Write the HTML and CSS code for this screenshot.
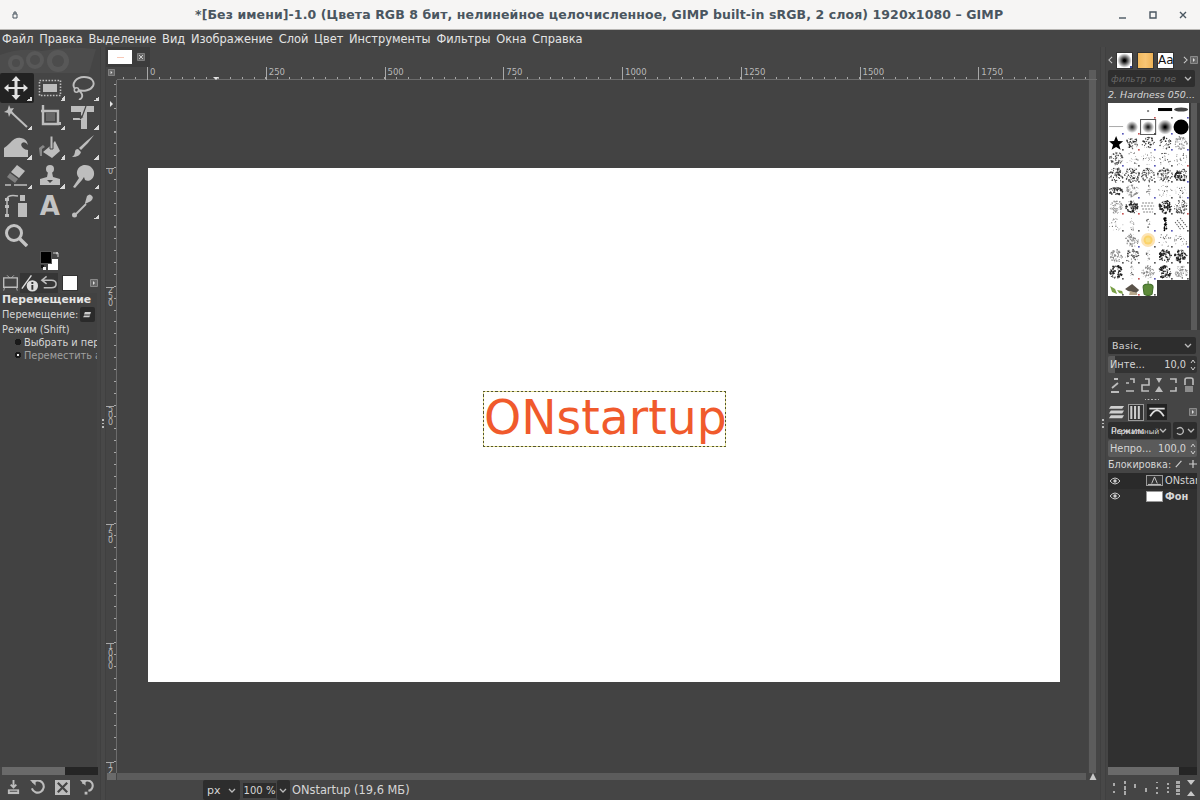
FILE: index.html
```html
<!DOCTYPE html>
<html lang="ru">
<head>
  <meta charset="UTF-8">
  <title>GIMP</title>
  <link rel="stylesheet" href="styles.css">
</head>
<body>
  <header class="titlebar">
    <svg class="win-menu" viewBox="0 0 8 8"><path d="M2 3h4v4H2zM3 3V1h2v2" fill="none" stroke="#4a5660"/></svg>
    <div class="title">*[Без имени]-1.0 (Цвета RGB 8 бит, нелинейное целочисленное, GIMP built-in sRGB, 2 слоя) 1920x1080 – GIMP</div>
    <div class="win-buttons">
      <svg viewBox="0 0 10 10"><path d="M1 8h7" stroke="#4a5660" stroke-width="1.4"/></svg>
      <svg viewBox="0 0 10 10"><path d="M2 2h6v6H2z" fill="none" stroke="#4a5660" stroke-width="1.4"/></svg>
      <svg viewBox="0 0 10 10"><path d="M2 2l6 6M8 2l-6 6" stroke="#4a5660" stroke-width="1.4"/></svg>
    </div>
  </header>

  <nav class="menubar">
    <span>Файл</span><span>Правка</span><span>Выделение</span><span>Вид</span><span>Изображение</span><span>Слой</span><span>Цвет</span><span>Инструменты</span><span>Фильтры</span><span>Окна</span><span>Справка</span>
  </nav>

  <div class="workspace">
    <aside class="toolbox">
      <svg class="wilber" viewBox="0 0 96 25"><path d="M0 25V7Q20 -1 42 3Q70 -2 96 1L89 25z" fill="#4c4c4c"/><circle cx="16" cy="15" r="8" fill="#585858"/><circle cx="16" cy="15" r="4" fill="#4c4c4c"/><circle cx="35" cy="12" r="9" fill="#585858"/><circle cx="35" cy="12" r="5" fill="#4c4c4c"/><circle cx="58" cy="13" r="11" fill="#585858"/><circle cx="58" cy="13" r="6" fill="#4c4c4c"/></svg>
      <div class="tools">
        <div class="tool active"><svg viewBox="0 0 24 24"><path fill="#e2e2e2" d="M12 0l4.500 5h-3v6h6V8l4.500 4-4.500 4v-3h-6v6h3L12 24l-4.500-5h3v-6h-6v3L0 12l4.500-4v3h6V5h-3z"/></svg></div>
        <div class="tool"><svg viewBox="0 0 24 24"><path d="M1.500 4.500h21v15h-21z" fill="none" stroke="#bdbdbd" stroke-width="1.600" stroke-dasharray="1.600 1.400"/><path d="M5 8h14v8H5z" fill="#bdbdbd"/></svg></div>
        <div class="tool"><svg viewBox="0 0 24 24"><path d="M4 13C0 8 5 1 13 1s11 5 9 9-9 6-15 4c3 2 5 4 4 7s-3 2-3 2" fill="none" stroke="#bdbdbd" stroke-width="1.900"/><circle cx="5.500" cy="14" r="2.200" fill="none" stroke="#bdbdbd" stroke-width="1.500"/></svg></div>

        <div class="tool"><svg viewBox="0 0 24 24"><path d="M8 8l15 14" stroke="#bdbdbd" stroke-width="2"/><path d="M5 0l1.500 3.500L10 3 8 6l2 3-3.500-.5L5 12 4 8 0 7l3.500-2z" fill="#bdbdbd"/></svg></div>
        <div class="tool"><svg viewBox="0 0 24 24"><path d="M5 0v4M5 4v15h15V6H3" fill="none" stroke="#bdbdbd" stroke-width="2.400"/><path d="M8 7h9v9H8z" fill="#666"/><path d="M22 17v3" stroke="#bdbdbd" stroke-width="2"/></svg></div>
        <div class="tool"><svg viewBox="0 0 24 24"><path d="M0 1h23v6h-7v17h-6V15H2v-2h8V7H0z" fill="#bdbdbd"/><path d="M3 12h8l-2-2M11 12l-2 2M15 1l-4 11" fill="none" stroke="#454545" stroke-width="1.200"/></svg></div>

        <div class="tool"><svg viewBox="0 0 24 24"><path d="M0 22v-9q3-2 6-5 5-6 11-5 6 1 7 7-3-4-6-2-2 2 1 5 2 2 5 2v7z" fill="#bdbdbd"/></svg></div>
        <div class="tool"><svg viewBox="0 0 24 24"><path d="M11 11l6-6 5 10-8 7-9-6z" fill="#bdbdbd" transform="translate(0 1)"/><path d="M12 1h3v13h-3z" fill="#bdbdbd" stroke="#454545"/><path d="M1 13l4-3 2 2-3 2v7H2z" fill="#888"/></svg></div>
        <div class="tool"><svg viewBox="0 0 24 24"><path d="M23 0Q17 9 10 15l-2-2Q15 6 23 0z" fill="#bdbdbd"/><path d="M7 14l3 3q-1 5-9 5 3-2 3-5t3-3z" fill="#bdbdbd"/></svg></div>

        <div class="tool"><svg viewBox="0 0 24 24"><path d="M13 1l8 6-6 7-8-6z" fill="#bdbdbd"/><path d="M6 9l8 6-3 4-8-6z" fill="#7f7f7f"/><path d="M1 21h6M10 21h13" stroke="#bdbdbd" stroke-width="1.500"/></svg></div>
        <div class="tool"><svg viewBox="0 0 24 24"><circle cx="12" cy="5" r="4" fill="#bdbdbd"/><path d="M10 8h4l1 5 7 2v6H2v-6l7-2z" fill="#bdbdbd"/><path d="M9 16h6l-3 3z" fill="#454545"/></svg></div>
        <div class="tool"><svg viewBox="0 0 24 24"><path d="M2 23l6-9C3 8 8 1 14 1s10 5 9 10-6 7-9 5l-1-3-2 3-7 8z" fill="#bdbdbd"/></svg></div>

        <div class="tool plain"><svg viewBox="0 0 24 24"><path d="M3 5Q4 0 14 2" fill="none" stroke="#bdbdbd" stroke-width="1.500"/><path d="M3 4v18" stroke="#bdbdbd" stroke-width="1.500"/><path d="M1 4h4v3H1zM1 11h4v3H1zM1 20h4v3H1z" fill="#bdbdbd"/><path d="M14 9h9v14h-9zM16 1h5v6h-5z" fill="#bdbdbd"/></svg></div>
        <div class="tool plain"><span class="tool-letter">A</span></div>
        <div class="tool"><svg viewBox="0 0 24 24"><path d="M14 9l2-7q3-3 5 0 2 2-1 5l-6 3z" fill="#bdbdbd"/><path d="M15 10L5 20" stroke="#bdbdbd" stroke-width="1.800"/><circle cx="3.500" cy="21" r="2.500" fill="#bdbdbd"/></svg></div>

        <div class="tool plain"><svg viewBox="0 0 24 24"><circle cx="10" cy="10" r="7.500" fill="none" stroke="#c4c4c4" stroke-width="3"/><path d="M15 15l8 8" stroke="#c4c4c4" stroke-width="3.400"/></svg></div>
      </div>

      <div class="colors">
        <div class="color-stack">
          <span class="color-bg"></span><span class="color-fg"></span>
          <svg class="color-swap" viewBox="0 0 6 6"><path d="M0 1h5v4M3 0l2 1-2 1" fill="none" stroke="#ccc"/></svg>
          <svg class="color-default" viewBox="0 0 5 5"><path d="M0 0h3v3H0z" fill="#111"/><path d="M2 2h3v3H2z" fill="#eee"/></svg>
        </div>
      </div>

      <div class="option-tabs">
        <svg class="tab active-tab" viewBox="0 0 20 20"><path d="M2 4h16v11H2z" fill="none" stroke="#bdbdbd" stroke-width="1.600"/><path d="M6 1l3 3M14 1l-3 3M3 15l-1 4M17 15l1 4" stroke="#bdbdbd"/></svg>
        <svg class="tab" viewBox="0 0 20 20"><path d="M2 16L12 2" stroke="#ddd" stroke-width="1.500"/><circle cx="13" cy="13" r="6" fill="#ddd"/><path d="M12 9h2v2h-2zM12 12h2v5h-2z" fill="#333"/></svg>
        <svg class="tab" viewBox="0 0 20 20"><path d="M8 3L3 7l5 4M3 7h10q5 0 5 4t-5 4H5" fill="none" stroke="#bdbdbd" stroke-width="1.600"/></svg>
        <span class="tab-swatch"></span>
        <svg class="dock-config" viewBox="0 0 8 8"><path d="M.5.5h7v7h-7z" fill="#666" stroke="#8a8a8a"/><path d="M3 2l2 2-2 2z" fill="#ddd"/></svg>
      </div>

      <section class="tool-options">
        <h4>Перемещение</h4>
        <div class="opt-row">Перемещение:<span class="opt-btn"><svg viewBox="0 0 10 8"><path d="M2 1h7L8 4H1zM1 5h7L7 7H0z" fill="#ccc"/></svg></span></div>
        <div class="opt-label">Режим (Shift)</div>
        <div class="radio on">Выбрать и пер</div>
        <div class="radio off">Переместить а</div>
      </section>

      <div class="hscroll tool-scroll"><span></span></div>
      <div class="bottom-btns">
        <svg viewBox="0 0 16 16"><path d="M8 0v8M5 5l3 3 3-3" fill="none" stroke="#bdbdbd" stroke-width="2"/><path d="M2 10h12v5H2z" fill="#bdbdbd"/><path d="M4 12h8" stroke="#454545"/></svg>
        <svg viewBox="0 0 16 16"><path d="M3 3a6.500 6.500 0 1 1-1 6" fill="none" stroke="#bdbdbd" stroke-width="2.200"/><path d="M0 0h6v6z" fill="#bdbdbd"/></svg>
        <svg viewBox="0 0 16 16"><path d="M0 0h16v16H0z" fill="#bdbdbd"/><path d="M3 3l10 10M13 3L3 13" stroke="#454545" stroke-width="2.400"/></svg>
        <svg viewBox="0 0 16 16"><path d="M4 4a5.500 5.500 0 1 1 6 7.500" fill="none" stroke="#bdbdbd" stroke-width="2.200"/><path d="M1 0h6v6z" fill="#bdbdbd"/><path d="M6 12.500h3v3H6z" fill="#bdbdbd"/></svg>
      </div>
    </aside>

    <div class="handle"><i></i></div>

    <main class="center">
      <div class="image-tabs">
        <div class="image-tab">
          <span class="thumb"><i></i></span>
          <svg class="tab-close" viewBox="0 0 8 8"><path d="M.5.5h7v7h-7z" fill="#666" stroke="#7c7c7c"/><path d="M2 2l4 4M6 2L2 6" stroke="#ccc"/></svg>
        </div>
      </div>
      <div class="editor">
        <div class="ruler-top">
          <div class="ruler-corner"><svg viewBox="0 0 8 8"><path d="M.5.5h7v7h-7z" fill="#666" stroke="#8a8a8a"/><path d="M3 2l2 2-2 2z" fill="#ddd"/></svg></div>
          <div class="hruler">
            <span>0</span><span>250</span><span>500</span><span>750</span><span>1000</span><span>1250</span><span>1500</span><span>1750</span>
            <b class="marker-h"></b>
          </div>
        </div>
        <div class="editor-mid">
          <div class="vruler">
            <span>0</span><span>250</span><span>500</span><span>750</span><span>1000</span><span>1250</span>
            <b class="marker-v"></b>
          </div>
          <div class="viewport">
            <div class="page">
              <div class="text-layer">ONstartup</div>
            </div>
          </div>
          <div class="vscroll"></div>
        </div>
        <div class="editor-bottom">
          <span class="qmask"></span>
          <div class="hscroll-main"></div>
          <svg class="nav-icon" viewBox="0 0 8 8"><path d="M4 0l4 8H0z" fill="#c8c8c8"/></svg>
        </div>
      </div>
      <footer class="statusbar">
        <div class="combo unit">px<svg class="chev" viewBox="0 0 8 5"><path d="M1 1l3 3 3-3" fill="none" stroke="#bbb" stroke-width="1.300"/></svg></div>
        <div class="zoom-value">100 %</div>
        <div class="combo zoom-drop"><svg class="chev" viewBox="0 0 8 5"><path d="M1 1l3 3 3-3" fill="none" stroke="#bbb" stroke-width="1.300"/></svg></div>
        <div class="status-text">ONstartup (19,6 МБ)</div>
      </footer>
    </main>

    <div class="handle"><i></i></div>

    <aside class="dock">
      <div class="dock-tabs">
        <svg class="arrow" viewBox="0 0 6 10"><path d="M5 1L1 5l4 4" fill="none" stroke="#ccc" stroke-width="1.300"/></svg>
        <span class="dock-tab brush-tab"></span>
        <span class="dock-tab pattern-tab"></span>
        <span class="dock-tab font-tab">Aa</span>
        <svg class="arrow" viewBox="0 0 6 10"><path d="M1 1l4 4-4 4" fill="none" stroke="#ccc" stroke-width="1.300"/></svg>
        <svg class="dock-config" viewBox="0 0 8 8"><path d="M.5.5h7v7h-7z" fill="#666" stroke="#8a8a8a"/><path d="M3 2l2 2-2 2z" fill="#ddd"/></svg>
      </div>
      <div class="filter-field"><span>фильтр по ме</span><svg class="chev" viewBox="0 0 8 5"><path d="M1 1l3 3 3-3" fill="none" stroke="#bbb" stroke-width="1.300"/></svg></div>
      <div class="brush-name">2. Hardness 050...</div>
      <div class="brush-panel">
        <div class="brush-list">
          <div class="brush-grid" id="brushGrid"></div>
        </div>
        <div class="brush-scroll"></div>
      </div>
      <div class="combo tags">Basic,<svg class="chev" viewBox="0 0 8 5"><path d="M1 1l3 3 3-3" fill="none" stroke="#bbb" stroke-width="1.300"/></svg></div>
      <div class="spin spin-first"><span>Инте...</span><span class="spin-val">10,0</span><svg class="updown" viewBox="0 0 6 14"><path d="M1 5l2-3 2 3M1 9l2 3 2-3" fill="none" stroke="#ccc"/></svg></div>
      <div class="brush-actions">
        <svg viewBox="0 0 10 16"><path d="M1 15h8M2 11l6-5M4 2h4" stroke="#bdbdbd" stroke-width="1.800" fill="none"/></svg>
        <svg viewBox="0 0 10 16"><path d="M5 2h4v4M1 6h3M1 14h8" stroke="#bdbdbd" stroke-width="1.600" fill="none"/></svg>
        <svg viewBox="0 0 10 16"><path d="M5 2h4v6H2v6h7" stroke="#bdbdbd" stroke-width="1.600" fill="none"/></svg>
        <svg viewBox="0 0 10 16"><path d="M2 1h6L5 6zM5 9l4 6H1z" fill="#bdbdbd"/></svg>
        <svg viewBox="0 0 10 16"><path d="M1 2h6v4M1 14h6v-4" stroke="#bdbdbd" stroke-width="1.600" fill="none"/></svg>
        <svg viewBox="0 0 10 16"><path d="M1 8V3q0-2 2-2h4q2 0 2 2v5" stroke="#bdbdbd" stroke-width="1.600" fill="none"/><path d="M1 9h8v6H1z" fill="#8c8c8c"/></svg>
      </div>
      <div class="dock-dots"></div>

      <div class="layer-tabs">
        <svg class="ltab" viewBox="0 0 18 18"><path d="M3 2h14l-2 3H1zM3 7h14l-2 3H1zM3 12h14l-2 3H1z" fill="#cfcfcf"/></svg>
        <span class="ltab ltab-active"><svg viewBox="0 0 14 16"><path d="M2 1v14M6 1v14M10 1v14" stroke="#cfcfcf" stroke-width="2.200"/></svg></span>
        <span class="ltab ltab-dark"><svg viewBox="0 0 18 14"><path d="M0 3h18M1 12q8-14 16 0" fill="none" stroke="#dcdcdc" stroke-width="2"/></svg></span>
        <span class="fill"></span>
        <svg class="dock-config" viewBox="0 0 8 8"><path d="M.5.5h7v7h-7z" fill="#666" stroke="#8a8a8a"/><path d="M3 2l2 2-2 2z" fill="#ddd"/></svg>
      </div>
      <div class="mode-row">
        <div class="combo mode"><span class="mode-text"><span>Режим</span><span class="over">Нормальный</span></span><svg class="chev" viewBox="0 0 8 5"><path d="M1 1l3 3 3-3" fill="none" stroke="#bbb" stroke-width="1.300"/></svg></div>
        <div class="combo mode-reset"><svg viewBox="0 0 10 10"><path d="M2 3a3.500 3.500 0 1 1 0 4" fill="none" stroke="#bbb" stroke-width="1.300"/></svg><svg class="chev" viewBox="0 0 8 5"><path d="M1 1l3 3 3-3" fill="none" stroke="#bbb" stroke-width="1.300"/></svg></div>
      </div>
      <div class="spin"><span>Непро...</span><span class="spin-val">100,0</span><svg class="updown" viewBox="0 0 6 14"><path d="M1 5l2-3 2 3M1 9l2 3 2-3" fill="none" stroke="#ccc"/></svg></div>
      <div class="lock-row">Блокировка:
        <svg viewBox="0 0 10 10"><path d="M1 9l7-8" stroke="#ccc" stroke-width="1.500"/></svg>
        <svg class="lock-plus" viewBox="0 0 10 10"><path d="M5 0v10M0 5h10" stroke="#ccc" stroke-width="1.500"/></svg>
      </div>
      <div class="layers">
        <div class="layer selected">
          <svg class="eye" viewBox="0 0 12 8"><path d="M1 4q5-6 10 0-5 6-10 0z" fill="none" stroke="#ccc"/><circle cx="6" cy="4" r="1.700" fill="#ccc"/></svg>
          <span class="layer-thumb text-thumb"><svg viewBox="0 0 16 10"><path d="M5 8l3-7 3 7M1 9h14" fill="none" stroke="#ccc"/></svg></span>
          <span class="layer-name">ONstartup</span>
        </div>
        <div class="layer">
          <svg class="eye" viewBox="0 0 12 8"><path d="M1 4q5-6 10 0-5 6-10 0z" fill="none" stroke="#ccc"/><circle cx="6" cy="4" r="1.700" fill="#ccc"/></svg>
          <span class="layer-thumb white-thumb"></span>
          <span class="layer-name bold">Фон</span>
        </div>
      </div>
      <div class="hscroll dock-scroll"><span></span></div>
      <div class="dock-bottom">
        <svg viewBox="0 0 4 12"><path d="M1 1h2v3H1zM1 9h2v2H1z" fill="#aaa"/></svg>
        <svg viewBox="0 0 4 14"><path d="M1 0h2v3H1zM1 5h2v4H1zM1 10h2v4H1z" fill="#aaa"/></svg>
        <svg viewBox="0 0 4 12"><path d="M1 2h2v4H1z" fill="#aaa"/></svg>
        <svg viewBox="0 0 4 12"><path d="M1 6h2v4H1z" fill="#aaa"/></svg>
        <svg viewBox="0 0 4 14"><path d="M1 1h2v1H1zM1 6h2v2H1zM1 11h2v2H1z" fill="#aaa"/></svg>
        <svg viewBox="0 0 4 14"><path d="M1 2h2v2H1zM1 6h2v2H1zM1 10h2v2H1z" fill="#aaa"/></svg>
        <svg viewBox="0 0 4 14"><path d="M0 0h4v3H0zM0 4h4v3H0zM0 8h4v3H0zM0 12h4v2H0z" fill="#aaa"/></svg>
        <svg class="wide" viewBox="0 0 8 16"><path d="M0 0h8L4 5zM4 11l4 5H0z" fill="#c8c8c8"/></svg>
      </div>
    </aside>
  </div>
  <script src="script.js"></script>
</body>
</html>
```

FILE: styles.css
```css
* {
  margin: 0;
  padding: 0;
  box-sizing: border-box;
}

body {
  width: 1200px;
  height: 800px;
  overflow: hidden;
  display: flex;
  flex-direction: column;
  font-family: "DejaVu Sans", sans-serif;
  font-size: 11px;
  color: #d6d6d6;
  background: #454545;
}

svg {
  display: block;
  flex: none;
}

/* window chrome */
.titlebar {
  height: 30px;
  flex: none;
  display: flex;
  align-items: center;
  padding-left: 11px;
  background: #f6f5f4;
  border-bottom: 1px solid #b8b6b3;
  color: #4a5660;
}

.win-menu {
  width: 8px;
  height: 8px;
}

.title {
  margin-left: 176px;
  width: 808px;
  white-space: nowrap;
  font-weight: bold;
  font-size: 12.500px;
  letter-spacing: 0.096px;
}

.win-buttons {
  margin-left: 115px;
  display: flex;
  gap: 20px;
}

.win-buttons svg {
  width: 10px;
  height: 10px;
}

.menubar {
  height: 17px;
  flex: none;
  display: flex;
  gap: 5.800px;
  padding-left: 2px;
  align-items: center;
  font-size: 11.400px;
  color: #e4e4e4;
  background: #454545;
}

.workspace {
  flex: 1;
  display: flex;
  min-height: 0;
}

.handle {
  width: 6px;
  flex: none;
  display: flex;
  align-items: center;
  justify-content: center;
  background: #484848;
  border-left: 1px solid #404040;
  border-right: 1px solid #404040;
}

.handle i {
  width: 2px;
  height: 9px;
  background: repeating-linear-gradient(#bbb 0 1.500px, transparent 1.500px 3.500px);
}

/* toolbox */
.toolbox {
  width: 100px;
  flex: none;
  display: flex;
  flex-direction: column;
  background: #454545;
}

.wilber {
  width: 96px;
  height: 25px;
  margin-top: 1px;
  flex: none;
}

.tools {
  display: grid;
  grid-template-columns: repeat(3, 33.500px);
  grid-auto-rows: 29.500px;
}

.tool {
  display: flex;
  align-items: center;
  justify-content: center;
  padding-right: 1px;
  background: linear-gradient(135deg, transparent 50%, #d8d8d8 50%) no-repeat right 2px bottom 2px / 5px 5px;
}

.tool.plain {
  background: none;
}

.tool.active {
  background-color: #222;
  border-radius: 2px;
}

.tool svg {
  width: 24px;
  height: 24px;
}

.tool-letter {
  font-size: 26px;
  font-weight: bold;
  line-height: 1;
  color: #c4c4c4;
}

.colors {
  height: 22px;
  flex: none;
  margin-top: 1px;
  padding: 1px 0 0 40px;
}

.color-stack {
  position: relative;
  width: 20px;
  height: 20px;
}

.color-fg,
.color-bg {
  position: absolute;
  width: 10px;
  height: 11px;
}

.color-fg {
  left: 1px;
  top: 0;
  background: #000;
  outline: 1px solid #555;
}

.color-bg {
  left: 8px;
  top: 7px;
  background: #fff;
}

.color-swap {
  position: absolute;
  left: 13px;
  top: 0;
  width: 6px;
  height: 6px;
}

.color-default {
  position: absolute;
  left: 1px;
  top: 13px;
  width: 5px;
  height: 5px;
}

.option-tabs {
  height: 20px;
  flex: none;
  display: flex;
  align-items: center;
  padding-left: 1px;
}

.tab {
  width: 19px;
  height: 20px;
}

.tab + .tab {
  background: #363636;
}

.active-tab {
  padding: 1px;
}

.tab-swatch {
  width: 16px;
  height: 16px;
  margin-left: 4px;
  background: #fff;
  border: 1px solid #333;
}

.option-tabs .dock-config {
  margin-left: 12px;
}

.dock-config {
  width: 8px;
  height: 8px;
}

.tool-options {
  flex: 1;
  min-height: 0;
  margin-right: 3px;
  padding: 0 0 0 2px;
  background: #424242;
  overflow: hidden;
  white-space: nowrap;
}

.tool-options h4 {
  font-size: 10.800px;
  line-height: 14px;
  color: #e4e4e4;
}

.opt-row {
  display: flex;
  align-items: center;
  height: 14px;
  gap: 2px;
  font-size: 9.800px;
}

.opt-btn {
  width: 15px;
  height: 15px;
  background: #2a2a2a;
  border-radius: 2px;
  display: flex;
  align-items: center;
  justify-content: center;
}

.opt-btn svg {
  width: 9px;
  height: 7px;
}

.opt-label {
  margin-top: 2px;
  font-size: 9.800px;
  line-height: 13px;
}

.radio {
  padding-left: 22px;
  font-size: 9.800px;
  line-height: 13px;
  background: radial-gradient(circle 3px at 16px 6px, #1a1a1a 98%, transparent) no-repeat;
}

.radio.off {
  color: #a0a0a0;
  background: radial-gradient(circle 1px at 16px 6px, #eee 98%, transparent), radial-gradient(circle 3px at 16px 6px, #1a1a1a 98%, transparent);
}

.hscroll {
  height: 8px;
  flex: none;
  background: #252525;
}

.hscroll span {
  display: block;
  height: 100%;
  background: #6a6a6a;
}

.tool-scroll {
  margin: 0 2px;
}

.tool-scroll span {
  width: 63px;
}

.bottom-btns {
  height: 25px;
  flex: none;
  display: flex;
  align-items: center;
  justify-content: space-between;
  padding: 0 6px;
}

.bottom-btns svg {
  width: 15px;
  height: 15px;
}

/* image area */
.center {
  flex: 1;
  min-width: 0;
  display: flex;
  flex-direction: column;
}

.image-tabs {
  height: 20px;
  flex: none;
  background: #454545;
}

.image-tab {
  width: 44px;
  height: 20px;
  display: flex;
  align-items: center;
  gap: 5px;
  padding-left: 2px;
  background: #3c3c3c;
}

.thumb {
  width: 24px;
  height: 14px;
  background: #fff;
  display: flex;
  align-items: center;
  justify-content: center;
}

.thumb i {
  width: 7px;
  height: 1px;
  background: #f8c9b8;
}

.tab-close {
  width: 8px;
  height: 8px;
}

.editor {
  flex: 1;
  min-height: 0;
  display: flex;
  flex-direction: column;
  padding-right: 3px;
}

.ruler-top {
  height: 13px;
  flex: none;
  display: flex;
}

.ruler-corner {
  width: 11px;
  flex: none;
  padding: 2px 0 0 2px;
}

.ruler-corner svg {
  width: 7px;
  height: 7px;
}

.hruler {
  position: relative;
  flex: 1;
  display: flex;
  padding-left: 30px;
  margin-right: 8px;
  font-size: 8.500px;
  color: #b8b8b8;
  background:
    linear-gradient(#6c6c6c, #6c6c6c) bottom / 100% 1px no-repeat,
    repeating-linear-gradient(90deg, #a8a8a8 0 1px, transparent 1px 11.875px) 6.200px bottom / 100% 3px no-repeat;
}

.hruler span {
  width: 118.750px;
  flex: none;
  height: 13px;
  line-height: 10px;
  padding-left: 2px;
  border-left: 1px solid #a8a8a8;
}

.marker-h {
  position: absolute;
  left: 96px;
  bottom: 0;
  border: 3px solid transparent;
  border-top-color: #e4e4e4;
  border-bottom: 0;
}

.editor-mid {
  flex: 1;
  min-height: 0;
  display: flex;
}

.vruler {
  position: relative;
  width: 11px;
  flex: none;
  overflow: hidden;
  padding-top: 88px;
  font-size: 8px;
  line-height: 6.500px;
  color: #b8b8b8;
  background:
    linear-gradient(#6c6c6c, #6c6c6c) right / 1px 100% no-repeat,
    repeating-linear-gradient(#a8a8a8 0 1px, transparent 1px 11.875px) right 0 top 4px / 3px 100% no-repeat;
}

.vruler span {
  display: block;
  height: 118.750px;
  width: 8px;
  padding-left: 2px;
  word-break: break-all;
  border-top: 1px solid #a8a8a8;
  overflow: hidden;
}

.marker-v {
  position: absolute;
  left: 4px;
  top: 21px;
  border: 3px solid transparent;
  border-left-color: #e4e4e4;
  border-right: 0;
}

.viewport {
  flex: 1;
  min-width: 0;
  padding: 88px 0 0 31px;
  background: #434343;
  overflow: hidden;
}

.page {
  width: 912px;
  height: 514px;
  background: #fff;
  padding: 223px 0 0 335px;
}

.text-layer {
  width: 243px;
  height: 56px;
  line-height: 52px;
  text-align: center;
  white-space: nowrap;
  font-size: 47.300px;
  color: #f05a2c;
  border: 1px solid #8f8a3a;
  border-image: repeating-linear-gradient(45deg, #55552c 0 1.500px, #e2de8e 1.500px 3px) 1;
}

.vscroll {
  width: 7px;
  margin-top: -10px;
  margin-left: 1px;
  margin-right: 1px;
  flex: none;
  background: #5c5c5c;
}

.editor-bottom {
  height: 7px;
  flex: none;
  display: flex;
  align-items: stretch;
  padding-left: 1px;
  gap: 1px;
}

.qmask {
  width: 9px;
  background: #6a6a6a;
}

.hscroll-main {
  flex: 1;
  background: #5c5c5c;
}

.nav-icon {
  width: 8px;
  height: 7px;
  margin-left: 2px;
}

.statusbar {
  height: 20px;
  flex: none;
  display: flex;
  align-items: center;
  padding-left: 97px;
  gap: 2px;
}

.combo {
  display: flex;
  align-items: center;
  justify-content: space-between;
  background: #2d2d2d;
  border-radius: 2px;
}

.chev {
  width: 8px;
  height: 5px;
}

.unit {
  width: 37px;
  height: 20px;
  padding: 0 4px;
}

.zoom-value {
  width: 33px;
  height: 15px;
  margin-left: 1px;
  line-height: 15px;
  text-align: center;
  font-size: 10px;
  background: #2d2d2d;
}

.zoom-drop {
  width: 13px;
  height: 20px;
  padding-left: 2px;
  margin-left: -1px;
}

.status-text {
  font-size: 11.400px;
}

/* right dock */
.dock {
  width: 94px;
  flex: none;
  display: flex;
  flex-direction: column;
  padding-left: 2px;
  overflow: hidden;
}

.dock-tabs {
  height: 20px;
  flex: none;
  display: flex;
  align-items: center;
  margin-top: 3px;
  gap: 3px;
}

.arrow {
  width: 5px;
  height: 8px;
}

.dock-tab {
  width: 17px;
  height: 17px;
  border: 1px solid #333;
}

.brush-tab {
  background:
    linear-gradient(#3a4a9a, #3a4a9a) right bottom / 2px 2px no-repeat,
    radial-gradient(circle, #000 10%, #fff 68%);
}

.pattern-tab {
  background: linear-gradient(90deg, #f1b95e, #f8c574 50%, #eeb255);
  margin-left: 1px;
}

.font-tab {
  background: #fff;
  color: #111;
  font-size: 12px;
  line-height: 15px;
  text-align: center;
  margin-right: 6px;
}

.dock-tabs .dock-config {
  margin-left: -1px;
}

.filter-field {
  height: 17px;
  width: 87px;
  flex: none;
  display: flex;
  align-items: center;
  justify-content: space-between;
  padding: 0 3px;
  background: #2e2e2e;
  font-style: italic;
  font-size: 9px;
  white-space: nowrap;
  color: #666;
  border-radius: 2px;
}

.brush-name {
  height: 16px;
  line-height: 15px;
  flex: none;
  font-style: italic;
  font-size: 9.500px;
  white-space: nowrap;
}

.brush-panel {
  height: 227px;
  flex: none;
  display: flex;
  background: #3a3a3a;
}

.brush-list {
  width: 82px;
  flex: none;
  background: #3a3a3a;
}

.brush-grid {
  display: grid;
  grid-template-columns: repeat(5, 16.200px);
  grid-auto-rows: 16.080px;
}

.brush {
  background: #fff;
}

.brush svg {
  width: 100%;
  height: 100%;
  filter: blur(0.400px);
}

.brush-scroll {
  width: 6px;
  margin-left: 1px;
  background: #5a5a5a;
}

.tags {
  width: 88px;
  height: 17px;
  flex: none;
  margin-top: 7px;
  padding: 0 4px;
  font-size: 9.500px;
  letter-spacing: 0.300px;
}

.spin {
  width: 89px;
  height: 17px;
  flex: none;
  margin-top: 1px;
  display: flex;
  align-items: center;
  padding-left: 2px;
  font-size: 9.800px;
  white-space: nowrap;
  background: #5a5a5a;
  border-radius: 2px;
}

.spin-first {
  margin-top: 2px;
  background: linear-gradient(90deg, #5a5a5a 8%, #333 8%);
}

.spin-val {
  margin-left: auto;
}

.updown {
  width: 6px;
  height: 14px;
  margin: 0 1px 0 4px;
}

.brush-actions {
  height: 24px;
  flex: none;
  width: 88px;
  display: flex;
  justify-content: space-between;
  align-items: center;
  padding: 0 2px;
}

.brush-actions svg {
  width: 10px;
  height: 16px;
}

.dock-dots {
  height: 5px;
  flex: none;
  background: radial-gradient(circle 1px, #bbb 98%, transparent) center / 3.500px 3px repeat-x;
  width: 14px;
  margin-left: 37px;
}

.layer-tabs {
  height: 20px;
  flex: none;
  display: flex;
  align-items: center;
}

.layer-tabs svg.ltab {
  width: 17px;
  height: 17px;
}

.ltab-active {
  width: 16px;
  height: 17px;
  margin-left: 3px;
  border: 1px solid #9a9a9a;
  background: #333;
}

.ltab-dark {
  width: 20px;
  height: 16px;
  margin-left: 3px;
  padding: 2px 1px;
  background: #222;
}

.ltab svg {
  width: 100%;
  height: 100%;
}

.fill {
  flex: 1;
}

.layer-tabs .dock-config {
  margin-right: 3px;
}

.mode-row {
  display: flex;
  flex: none;
  gap: 2px;
  height: 17px;
}

.mode {
  width: 63px;
  padding-right: 4px;
}

.mode-text {
  position: relative;
  padding-left: 3px;
  font-size: 9.500px;
  white-space: nowrap;
}

.mode-text .over {
  position: absolute;
  left: 3px;
  top: 2px;
  font-size: 7.200px;
}

.mode-reset {
  width: 24px;
  padding: 0 2px;
}

.mode-reset svg:first-child {
  width: 10px;
  height: 10px;
}

.lock-row {
  height: 14px;
  flex: none;
  display: flex;
  align-items: center;
  white-space: nowrap;
  font-size: 9.600px;
  gap: 4px;
}

.lock-row svg {
  width: 8px;
  height: 8px;
}

.lock-row .lock-plus {
  margin-left: 2px;
}

.layers {
  flex: 1;
  min-height: 0;
  margin-top: 2px;
  width: 89px;
  background: #303030;
}

.layer {
  height: 15.500px;
  display: flex;
  align-items: center;
  overflow: hidden;
  white-space: nowrap;
  padding-left: 1px;
}

.layer.selected {
  background: #2a2a2a;
}

.eye {
  width: 12px;
  height: 8px;
}

.layer-thumb {
  width: 17px;
  height: 11px;
  margin-left: 25px;
  flex: none;
  border: 1px solid #999;
}

.white-thumb {
  background: #fff;
}

.text-thumb {
  background: #333;
}

.layer-name {
  margin-left: 2px;
  font-size: 9.800px;
}

.layer-name.bold {
  font-weight: bold;
}

.dock-scroll {
  width: 89px;
}

.dock-scroll span {
  width: 71px;
}

.dock-bottom {
  height: 25px;
  flex: none;
  width: 88px;
  display: flex;
  align-items: center;
  justify-content: space-between;
  padding: 0 1px 0 4px;
}

.dock-bottom svg {
  width: 4px;
  height: 14px;
}

.dock-bottom svg.wide {
  width: 8px;
  height: 16px;
}
```

FILE: script.js
```js
// thumbnails of the brush list, drawn from a small seeded generator
const linhas = [
  ['', '', 'dot', 'bar', 'softbar'],
  ['line', 'soft', 'sel', 'softbig', 'big'],
  ['star', 'splat', 'splat', 'splat', 'grey'],
  ['dense', 'sparse', 'sparse', 'sparse', 'sparse'],
  ['round', 'round', 'dense', 'round', 'dark'],
  ['oval', 'grey', 'thin', 'sparse', 'sparse'],
  ['grey', 'dark', 'lines', 'dark', 'dense'],
  ['sparse', 'thin', 'thin', 'stick', 'hatch'],
  ['', 'grey', 'glow', 'sparse', 'sparse'],
  ['grey', 'dense', 'thin', 'dark', 'dark'],
  ['dark', 'thin', 'grey', 'dark', 'grey'],
  ['leaf', 'wilber', 'pepper']
];

let semente = 7;
function rnd() {
  semente = (semente * 16807) % 2147483647;
  return semente / 2147483647;
}

function pontos(qtd, raio, tam, cor, rx, ry) {
  let s = '';
  for (let i = 0; i < qtd; i++) {
    const a = rnd() * 6.28;
    const d = Math.sqrt(rnd());
    const x = 8 + Math.cos(a) * d * (rx || raio);
    const y = 8 + Math.sin(a) * d * (ry || raio);
    s += `<circle cx="${x.toFixed(1)}" cy="${y.toFixed(1)}" r="${(tam * (0.45 + rnd() * 0.9)).toFixed(2)}" fill="${cor}"/>`;
  }
  return s;
}

function suave(r, escuro) {
  const id = 'g' + Math.floor(rnd() * 1e6);
  return `<defs><radialGradient id="${id}"><stop offset="0.1" stop-color="${escuro}"/><stop offset="1" stop-color="${escuro}" stop-opacity="0"/></radialGradient></defs><circle cx="8" cy="8" r="${r}" fill="url(#${id})"/>`;
}

const desenhos = {
  '': () => '',
  dot: () => '<rect x="7" y="7" width="2" height="2" fill="#888"/>',
  bar: () => '<rect x="1" y="5" width="14" height="3" fill="#000"/>',
  softbar: () => '<ellipse cx="8" cy="6.500" rx="7" ry="2" fill="#444"/>',
  line: () => '<rect x="1" y="7" width="14" height="1" fill="#aaa"/>',
  soft: () => suave(6, '#333'),
  sel: () => suave(6, '#222') + '<rect x="0.500" y="0.500" width="15" height="15" fill="none" stroke="#555"/>',
  softbig: () => suave(7.500, '#000'),
  big: () => '<circle cx="8" cy="8" r="7.500" fill="#000"/>',
  star: () => '<path d="M8 1l2 5 5 .300-4 3.500 1.500 5L8 12l-4.500 2.800L5 9.800 1 6.300 6 6z" fill="#000"/>',
  splat: () => pontos(42, 6, 0.65, '#333'),
  grey: () => pontos(70, 6.500, 0.6, '#888'),
  dense: () => pontos(70, 7, 0.6, '#444'),
  sparse: () => pontos(22, 7, 0.45, '#444'),
  round: () => pontos(85, 7.500, 0.6, '#333'),
  dark: () => pontos(70, 6.500, 0.75, '#222'),
  oval: () => pontos(50, 7, 0.7, '#333', 7, 4),
  thin: () => pontos(16, 0, 0.5, '#666', 2, 7),
  lines: () => '<path d="M2 4h12M1 7h13M2 10h12M3 13h10" stroke="#888" stroke-dasharray="2 1"/>',
  stick: () => pontos(30, 0, 0.8, '#000', 1.500, 7),
  hatch: () => '<path d="M2 6l6 8M4 4l7 9M7 2l7 9" stroke="#555" stroke-dasharray="1.500 1"/>',
  glow: () => '<circle cx="8" cy="8" r="7" fill="#fce3b4"/><circle cx="8" cy="8" r="4.500" fill="#fbd36a"/><circle cx="8" cy="8" r="2.500" fill="#f8e08a"/>',
  leaf: () => '<path d="M2 6l5 3 2 5-5-2zM9 10l5 1 1 3-4-1z" fill="#7aa048"/>',
  wilber: () => '<path d="M1 9l7-5 7 6-3 3-8-2z" fill="#5a534a"/><path d="M6 11l7 2v2H5z" fill="#b8a88c"/>',
  pepper: () => '<path d="M8 1v3M3 7q0-3 5-3t5 3l-1 7q-4 3-8 0z" fill="#5d8a3a" stroke="#3f6b28"/>'
};

const cores = ['#333', '#b33', '#33a', '#333'];
const grade = document.getElementById('brushGrid');
linhas.forEach(linha => {
  linha.forEach(nome => {
    const celula = document.createElement('div');
    celula.className = 'brush';
    const cor = cores[Math.floor(rnd() * cores.length)];
    const marca = nome && nome !== 'big' ? `<rect x="14" y="14" width="1.500" height="1.500" fill="${cor}"/>` : '';
    celula.innerHTML = `<svg viewBox="0 0 16 16">${desenhos[nome]()}${marca}</svg>`;
    grade.appendChild(celula);
  });
});
```
